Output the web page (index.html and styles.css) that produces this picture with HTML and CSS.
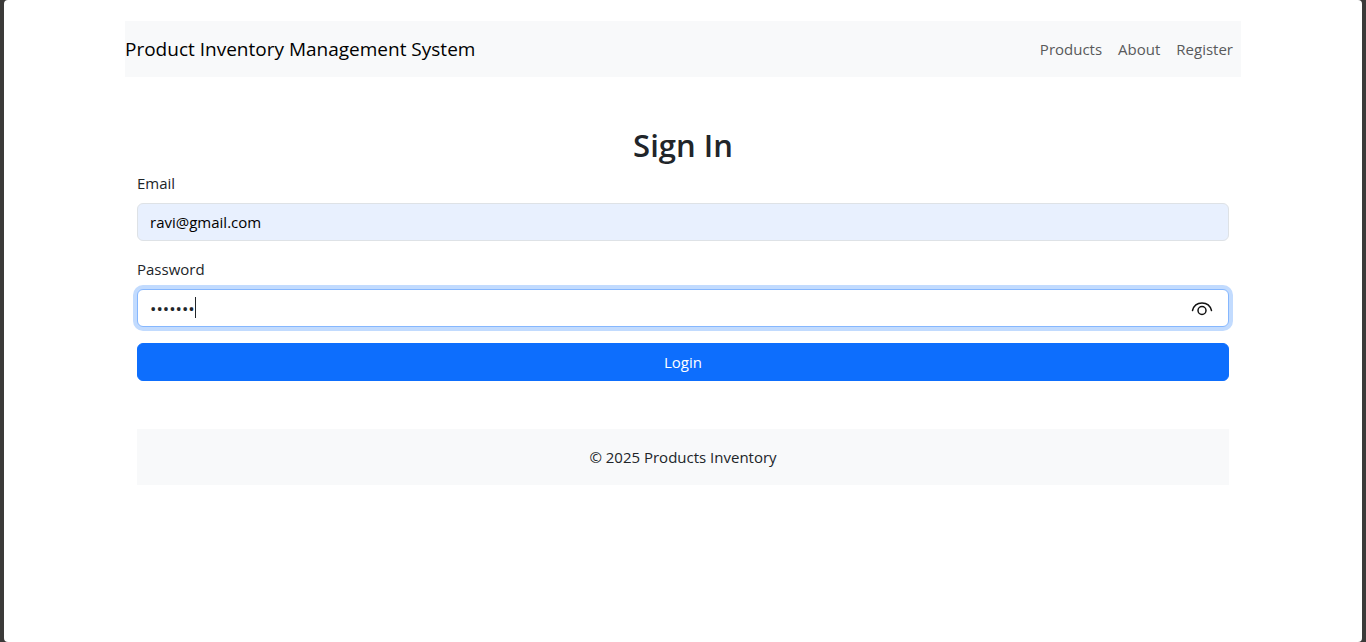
FILE: index.html
```html
<!DOCTYPE html>
<html lang="en">
<head>
<meta charset="utf-8">
<meta name="viewport" content="width=device-width, initial-scale=1">
<title>Product Inventory Management System</title>
<link rel="stylesheet" href="styles.css">
</head>
<body>
<div class="page">
  <div class="container">
    <nav class="navbar">
      <a class="brand" href="#">Product Inventory Management System</a>
      <ul class="nav-links">
        <li><a class="nav-link" href="#">Products</a></li>
        <li><a class="nav-link" href="#">About</a></li>
        <li><a class="nav-link" href="#">Register</a></li>
      </ul>
    </nav>
    <main class="content">
      <h2 class="title">Sign In</h2>
      <form class="form">
        <div class="field">
          <label class="label" for="email">Email</label>
          <input class="input input-filled" id="email" type="email" value="ravi@gmail.com">
        </div>
        <div class="field">
          <label class="label" for="password">Password</label>
          <div class="password-box">
            <input class="input input-password" id="password" type="password" value="1234567">
            <span class="caret"></span>
            <button class="reveal" type="button" aria-label="Show password">
              <svg class="eye" viewBox="0 0 22 16" fill="none" stroke="currentColor" stroke-width="1.5" stroke-linecap="round">
                <path d="M1.500 9.500C2.700 4.900 6.400 2 11 2s8.300 2.900 9.500 7.500"/>
                <circle cx="11" cy="9.500" r="4"/>
              </svg>
            </button>
          </div>
        </div>
        <button class="submit" type="submit">Login</button>
      </form>
    </main>
    <footer class="footer">© 2025 Products Inventory</footer>
  </div>
</div>
</body>
</html>
```

FILE: styles.css
```css
* {
  box-sizing: border-box;
}

body {
  margin: 0;
  background: #3b3a39;
  color: #212529;
  font-family: "Segoe UI", "Open Sans", sans-serif;
  font-size: 15px;
  line-height: 24px;
}

.page {
  min-height: 100vh;
  margin: 0 4px;
  padding-top: 21px;
  background: #fff;
  border-radius: 4px;
}

.container {
  max-width: 1140px;
  margin: 0 auto;
  padding: 0 12px;
}

.navbar {
  display: flex;
  align-items: center;
  justify-content: space-between;
  padding: 8px 0;
  background: #f8f9fa;
}

.brand {
  color: #000;
  font-size: 19px;
  line-height: 30px;
  text-decoration: none;
}

.nav-links {
  display: flex;
  margin: 0;
  padding: 0;
  list-style: none;
}

.nav-link {
  display: block;
  padding: 8px;
  color: #595a5b;
  text-decoration: none;
}

.content {
  padding: 48px 12px;
}

.title {
  margin: 0 0 6px;
  font-size: 31px;
  font-weight: 600;
  line-height: 40px;
  text-align: center;
}

.form {
  display: flex;
  flex-direction: column;
  gap: 16px;
}

.field {
  display: flex;
  flex-direction: column;
  gap: 8px;
}

.input {
  display: block;
  width: 100%;
  height: 38px;
  padding: 6px 12px;
  border: 1px solid #dee2e6;
  border-radius: 6px;
  outline: 0;
  background: #fff;
  color: #212529;
  font: inherit;
}

.input-filled {
  background: #e8f0fe;
  color: #000;
}

.input-password {
  padding-right: 48px;
  border-color: #86b7fe;
  box-shadow: 0 0 0 4px #c2dbfe;
  font-size: 17px;
}

.password-box {
  position: relative;
}

.caret {
  position: absolute;
  top: 8px;
  left: 58px;
  width: 1px;
  height: 21px;
  background: #212529;
}

.reveal {
  position: absolute;
  top: 8px;
  right: 12px;
  display: flex;
  align-items: center;
  justify-content: center;
  width: 30px;
  height: 24px;
  padding: 0;
  border: 0;
  background: none;
  color: #111;
}

.eye {
  width: 22px;
  height: 16px;
}

.submit {
  height: 38px;
  padding: 6px 12px;
  border: 1px solid #0d6efd;
  border-radius: 6px;
  background: #0d6efd;
  color: #fff;
  font: inherit;
}

.footer {
  margin: 0 12px;
  padding: 16px;
  background: #f8f9fa;
  text-align: center;
}
```
